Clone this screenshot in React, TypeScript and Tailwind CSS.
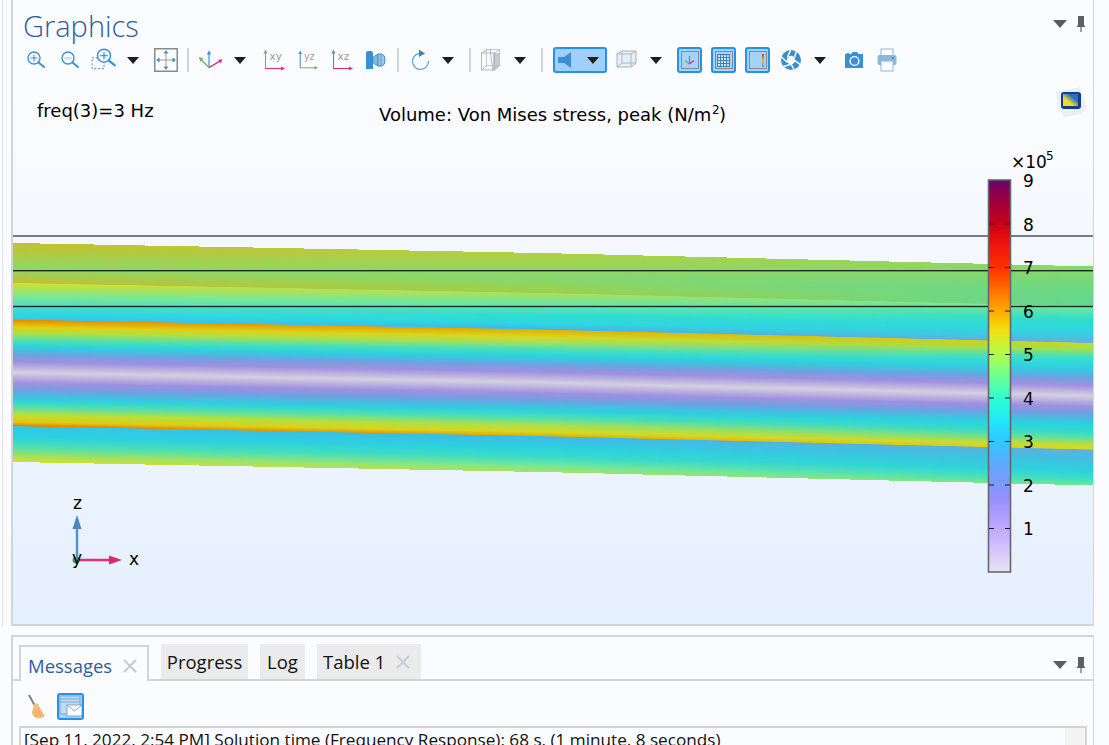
import React from 'react';

const BLUE = '#3b93d3';

// stress bands: local y at the left edge, then colour at left / middle / right of the plot
const bandStops: [number, string, string, string][] = [
  [243, '#c8c02c', '#b2d040', '#88d868'],
  [268, '#90d860', '#86d870', '#68d888'],
  [282.7, '#c0c038', '#a0d048', '#62d890'],
  [283.3, '#d0e030', '#a8e060', '#70e8a0'],
  [296, '#80e890', '#60e8b0', '#30dcc8'],
  [305, '#50e0c0', '#30dcd0', '#2cd8e0'],
  [313, '#2cd8e0', '#2cd8e0', '#40c8e0'],
  [319.2, '#38c8e8', '#40b8e8', '#60b0e0'],
  [319.9, '#e88c00', '#e0b000', '#d0d820'],
  [327, '#e0d010', '#d8d820', '#90e060'],
  [333, '#b0e040', '#a0e060', '#40e0c0'],
  [340, '#50e0b0', '#40e0c0', '#2cd8e0'],
  [347, '#2cd0e0', '#2cd0e0', '#38c8e0'],
  [355, '#70a0e0', '#70a0e0', '#70a0e0'],
  [362, '#a090e0', '#a090e0', '#a090e0'],
  [372.5, '#d4d0e0', '#d4d0e0', '#d4d0e0'],
  [383, '#a090e0', '#a090e0', '#a090e0'],
  [390, '#70a0e0', '#70a0e0', '#70a0e0'],
  [400, '#2cd0e0', '#2cd0e0', '#2cd0e0'],
  [408, '#60e0a0', '#50e0b0', '#30d8d0'],
  [415, '#c0e030', '#a8e050', '#60e0a0'],
  [422, '#e0c810', '#d8d820', '#c8dc30'],
  [425.8, '#e88000', '#e0b000', '#d8d820'],
  [426.5, '#30c8e8', '#40b8e8', '#60b0e0'],
  [437, '#2cd0e0', '#2cd0e0', '#40c0e0'],
  [447, '#50e0b0', '#38dcc8', '#2cd0e0'],
  [457, '#b0e050', '#80e890', '#40e0c0'],
  [462, '#d0e030', '#a8e060', '#70e890'],
];

const barStops: [number, string][] = [
  [180, '#6a0068'], [200, '#9c0040'], [224, '#c80018'], [240, '#e81010'], [267, '#ff3000'],
  [290, '#ff7000'], [313, '#ffb000'], [330, '#f0e010'], [355, '#b0ff50'], [375, '#70ff90'],
  [398, '#30ffd0'], [420, '#20e8f8'], [441, '#30c8ff'], [465, '#60a8ff'], [485, '#8098ff'],
  [500, '#9890ff'], [528, '#c0a8ff'], [572, '#e8e4f4'],
];

const mix = (a: string, b: string, t: number) => {
  const ch = (s: string, i: number) => parseInt(s.slice(1 + i * 2, 3 + i * 2), 16);
  const out = [0, 1, 2].map((i) => Math.round(ch(a, i) + (ch(b, i) - ch(a, i)) * t));
  return `rgb(${out.join(',')})`;
};

const BandColumns = () => {
  const cols = [];
  for (let x = 13; x < 1093; x += 3) {
    const off = x < 540 ? ((x - 13) / 527) * 10 : 10 + ((x - 540) / 553) * 13.5;
    cols.push({ x, off });
  }
  return (
    <>
      <defs>
        {cols.map(({ x, off }) => (
          <linearGradient key={x} id={`band${x}`} gradientUnits="userSpaceOnUse" x1="0" x2="0" y1={243 + off} y2={462 + off}>
            {bandStops.map(([y, l, c, r], i) => (
              <stop
                key={i}
                offset={(y - 243) / 219}
                stopColor={x < 540 ? mix(l, c, (x - 13) / 527) : mix(c, r, (x - 540) / 553)}
              />
            ))}
          </linearGradient>
        ))}
      </defs>
      {cols.map(({ x, off }) => (
        <rect key={x} x={x} y={243 + off} width={x + 3 >= 1093 ? 1093 - x : 3} height="219" fill={`url(#band${x})`} shapeRendering="crispEdges" />
      ))}
    </>
  );
};

const Plot = () => {
  const labels = [9, 8, 7, 6, 5, 4, 3, 2, 1];
  const font = { fontFamily: '"DejaVu Sans", sans-serif' };
  return (
    <svg className="block h-full w-full" viewBox="13 85 1080 539" style={font}>
      <defs>
        <linearGradient id="scale" gradientUnits="userSpaceOnUse" x1="0" x2="0" y1="180" y2="572">
          {barStops.map(([y, c]) => (
            <stop key={y} offset={(y - 180) / 392} stopColor={c} />
          ))}
        </linearGradient>
        <linearGradient id="logo" x1="0" y1="1" x2="1" y2="0">
          <stop offset="0.35" stopColor="#f2d92c" />
          <stop offset="0.7" stopColor="#2a6fc4" />
        </linearGradient>
      </defs>
      <BandColumns />
      <rect x="13" y="235" width="1080" height="2" fill="#7a7a82" />
      <rect x="13" y="270" width="1080" height="1.4" fill="#1f2a26" />
      <rect x="13" y="305.8" width="1080" height="1.4" fill="#1f2a26" />

      <text x="37" y="117" fontSize="18" fill="#000">freq(3)=3 Hz</text>
      <text x="379" y="121" fontSize="18" fill="#000">Volume: Von Mises stress, peak (N/m</text>
      <text x="712" y="114" fontSize="12" fill="#000">2</text>
      <text x="719" y="121" fontSize="18" fill="#000">)</text>

      {/* logo badge */}
      <path d="M1056 92 L1080 87 L1087 108 L1082 114 L1064 117 L1058 108 Z" fill="#eceef0" />
      <rect x="1061" y="92" width="20" height="17" rx="3" fill="#123f8c" />
      <rect x="1063" y="94" width="15" height="12" fill="url(#logo)" />

      {/* colour scale */}
      <rect x="988.5" y="180" width="22" height="392" fill="url(#scale)" />
      <rect x="988.5" y="180" width="22" height="392" fill="none" stroke="#66666e" strokeWidth="1.6" />
      {labels.map((n, i) => {
        const y = 180 + i * 43.5;
        return (
          <g key={n}>
            {i > 0 && <path d={`M989 ${y + 0.5} h5 M1005 ${y + 0.5} h5`} stroke="#1a1a1a" strokeWidth="1" />}
            <text x="1023" y={y + 7} fontSize="17" fill="#000">{n}</text>
          </g>
        );
      })}
      <text x="1011" y="168" fontSize="17" fill="#000">×10</text>
      <text x="1046" y="160" fontSize="12" fill="#000">5</text>

      {/* axis triad */}
      <circle cx="76" cy="560" r="3.5" fill="#4aa84a" />
      <path d="M77 560 V526" stroke="#5b92c8" strokeWidth="2.5" />
      <path d="M77 515 L81.5 529 H72.5 Z" fill="#4a86c2" />
      <path d="M77 560 H110" stroke="#e0306e" strokeWidth="2.4" />
      <path d="M122 560 L109 555.5 V564.5 Z" fill="#e0286a" />
      <text x="73" y="509" fontSize="17" fill="#000">z</text>
      <text x="72" y="564" fontSize="17" fill="#000">y</text>
      <text x="129" y="565" fontSize="17" fill="#000">x</text>
    </svg>
  );
};

const Caret = () => (
  <svg width="12" height="7" viewBox="0 0 12 7">
    <path d="M0 0 H12 L6 7 Z" fill="#1e1e1e" />
  </svg>
);

const Icon = ({ children, size = 24 }: { children: React.ReactNode; size?: number }) => (
  <svg width={size} height={size} viewBox="0 0 24 24" fill="none">
    {children}
  </svg>
);

const Lens = ({ cx = 10, cy = 10, mark = 'plus' }: { cx?: number; cy?: number; mark?: 'plus' | 'minus' }) => (
  <g stroke={BLUE} strokeLinecap="round">
    <circle cx={cx} cy={cy} r="6" strokeWidth="1.4" fill="#f4faff" />
    <path d={`M${cx + 4.5} ${cy + 4.5} L${cx + 10} ${cy + 9}`} strokeWidth="2" />
    <path d={mark === 'plus' ? `M${cx - 3} ${cy} h6 M${cx} ${cy - 3} v6` : `M${cx - 3} ${cy} h6`} strokeWidth="1.1" stroke={mark === 'plus' ? BLUE : '#9cc4e4'} />
  </g>
);

const ZoomBox = () => (
  <Icon size={26}>
    <rect x="1" y="10" width="11" height="10" stroke={BLUE} strokeDasharray="2 1.5" strokeWidth="0.9" />
    <Lens cx={12} cy={8} />
  </Icon>
);

const Extents = () => (
  <svg width="24" height="24" viewBox="0 0 24 24" fill="none">
    <rect x="0.75" y="0.75" width="22.5" height="22.5" stroke="#8a8a8a" strokeWidth="1.5" fill="#fbfcff" />
    <path d="M12 5 V19 M5 12 H19" stroke="#9a9a9a" strokeWidth="1" />
    <path d="M12 2 L14.5 5.5 H9.5 Z M12 22 L14.5 18.5 H9.5 Z M2 12 L5.5 9.5 V14.5 Z M22 12 L18.5 9.5 V14.5 Z" fill={BLUE} />
  </svg>
);

const Axes = () => (
  <Icon size={26}>
    <path d="M12 19 V6" stroke={BLUE} strokeWidth="1.1" />
    <path d="M12 3 L14 7 H10 Z" fill={BLUE} />
    <path d="M12 19 L4 11" stroke="#6cb85c" strokeWidth="1.3" />
    <path d="M2.5 9 L7 10.5 L4 13.5 Z" fill="#6cb85c" />
    <path d="M12 19 L22 13" stroke="#e0306e" strokeWidth="1.3" />
    <path d="M25 11.5 L20.5 11.5 L22.5 15 Z" fill="#e0306e" />
  </Icon>
);

const PlaneAxes = ({ label, up, right }: { label: string; up: string; right: string }) => (
  <svg width="24" height="24" viewBox="0 0 24 24" fill="none">
    <path d="M3.5 5 V20.5" stroke={up} strokeWidth="1.1" />
    <path d="M3.5 1.5 L5.5 5.5 H1.5 Z" fill={up} />
    <path d="M3 20.5 H20" stroke={right} strokeWidth="1.1" />
    <path d="M23 20.5 L19 18.5 V22.5 Z" fill={right} />
    <text x="7.5" y="12" fontSize="10.5" fill="#a0a0a0" fontFamily='"DejaVu Sans", sans-serif'>{label}</text>
  </svg>
);

const Scene = () => (
  <svg width="22" height="20" viewBox="0 0 22 20" fill="none">
    <path d="M1 3 Q1 1 3 1 H6 Q8 1 8 3 V19 H1 Z" fill="#3a90d4" />
    <path d="M8 7 L13 4 V16 L8 13 Z" fill="#8ab8dc" stroke="#3a90d4" strokeWidth="0.8" />
    <path d="M13 4 H17 Q20 5 20 10 Q20 15 17 16 H13 Z" fill="#a4c8e4" stroke="#3a90d4" strokeWidth="1" />
    <path d="M16 4.5 V15.5" stroke="#3a90d4" strokeWidth="0.8" />
  </svg>
);

const Rotate = () => (
  <Icon size={24}>
    <path d="M10 5.5 A8 8 0 1 0 19.5 13" stroke="#5aa6de" strokeWidth="1.3" />
    <path d="M10 1.5 L16 5.5 L10 9 Z" fill="#2f86c8" />
  </Icon>
);

const WireCube = () => (
  <svg width="22" height="24" viewBox="0 0 22 24" fill="none">
    <path d="M13 5 H20 V18 L14 22 H13 Z" fill="#cbcbcb" />
    <rect x="1.5" y="5" width="13" height="17" stroke="#a8a8a8" strokeWidth="0.8" />
    <rect x="6.5" y="1.5" width="13" height="16" stroke="#bdbdbd" strokeWidth="0.8" />
    <path d="M1.5 5 L6.5 1.5 M14.5 5 L19.5 1.5 M14.5 22 L19.5 17.5 M1.5 22 L6.5 17.5" stroke="#a8a8a8" strokeWidth="0.8" />
    <path d="M10 1 L13 23" stroke="#7cb8e4" strokeWidth="0.8" />
  </svg>
);

const BoxIcon = () => (
  <svg width="22" height="20" viewBox="0 0 22 20" fill="none">
    <path d="M1 4 L6 1 H20 V13 L15 17 H1 Z" fill="#e6eef6" stroke="#a6b2bc" strokeWidth="1" />
    <path d="M1 4 H15 V17 M15 4 L20 1 M6 1 V13 H20 M1 17 L6 13" stroke="#a6b2bc" strokeWidth="0.9" />
  </svg>
);

const Toggle = ({ children }: { children: React.ReactNode }) => (
  <div className="flex h-[26px] w-[25px] shrink-0 items-center justify-center rounded-[3px] border-2 border-[#2391ee] bg-[#a5d3fa]">
    <div className="flex h-[18px] w-[18px] items-center justify-center border-[1.5px] border-[#85888c]">{children}</div>
  </div>
);

const Aperture = () => (
  <svg width="22" height="22" viewBox="0 0 22 22" fill="none">
    <circle cx="11" cy="11" r="10" fill="#3a8fca" />
    <circle cx="11" cy="11" r="4.2" fill="#fbfcff" />
    <g stroke="#fbfcff" strokeWidth="1.5">
      <path d="M14.5 8.5 L17 0" />
      <path d="M15 11.7 L22 17" />
      <path d="M12 15 L3.5 17.5" />
      <path d="M7.5 13.5 L1 7.5" />
      <path d="M7.5 8 L11 0" />
      <path d="M11 15 L15 22" />
    </g>
  </svg>
);

const Camera = () => (
  <svg width="20" height="18" viewBox="0 0 20 18">
    <path d="M1 3 H3 V2 H5 V3 H7 L8.5 1 H13 L14.5 3 H19 V17 H1 Z" fill="#3a90d0" />
    <circle cx="10.5" cy="10" r="4.4" fill="#3a90d0" stroke="#fbfcff" strokeWidth="1.4" />
  </svg>
);

const Printer = () => (
  <svg width="20" height="24" viewBox="0 0 20 24" fill="none">
    <rect x="4" y="1" width="12" height="8" fill="#fbfcff" stroke="#8ab8dc" strokeWidth="1" />
    <rect x="0.5" y="7" width="19" height="10" rx="2" fill="#8fb8d8" />
    <circle cx="16" cy="10" r="1" fill="#3a80b8" />
    <rect x="4" y="13" width="12" height="10" fill="#fbfcff" stroke="#8ab8dc" strokeWidth="1" />
  </svg>
);

const Pin = () => (
  <svg width="10" height="16" viewBox="0 0 10 16">
    <path d="M2 0 H8 V9 L9.5 11 H5.6 V16 H4.4 V11 H0.5 L2 9 Z" fill="#5c6066" />
  </svg>
);

const PanelControls = () => (
  <div className="flex items-center gap-[9px]">
    <svg width="14" height="8" viewBox="0 0 14 8">
      <path d="M0 0 H14 L7 8 Z" fill="#5a5e64" />
    </svg>
    <Pin />
  </div>
);

const Sep = () => <div className="h-[24px] w-[2px] shrink-0 bg-[#d2d2d4]" />;

const Slot = ({ className, children }: { className: string; children?: React.ReactNode }) => (
  <div className={`flex h-[30px] shrink-0 items-center justify-center ${className}`}>{children}</div>
);

const Toolbar = () => (
  <div className="flex h-[30px] items-center pl-[6px]">
    <Slot className="w-[34px]"><Icon><Lens cx={10} cy={10} /></Icon></Slot>
    <Slot className="w-[34px]"><Icon><Lens cx={10} cy={10} mark="minus" /></Icon></Slot>
    <Slot className="w-[34px]"><ZoomBox /></Slot>
    <Slot className="w-[23px]"><Caret /></Slot>
    <Slot className="w-[43px]"><Extents /></Slot>
    <Sep />
    <Slot className="w-[40px]"><Axes /></Slot>
    <Slot className="w-[22px]"><Caret /></Slot>
    <Slot className="w-[46px]"><PlaneAxes label="xy" up="#6cb85c" right="#e0306e" /></Slot>
    <Slot className="w-[22px]"><PlaneAxes label="yz" up={BLUE} right="#6cb85c" /></Slot>
    <Slot className="w-[46px]"><PlaneAxes label="xz" up={BLUE} right="#e0306e" /></Slot>
    <Slot className="w-[22px]"><Scene /></Slot>
    <Slot className="w-[22px]"><Sep /></Slot>
    <Slot className="w-[24px]"><Rotate /></Slot>
    <Slot className="w-[30px]"><Caret /></Slot>
    <Slot className="w-[14px]"><Sep /></Slot>
    <Slot className="w-[28px]"><WireCube /></Slot>
    <Slot className="w-[30px]"><Caret /></Slot>
    <Slot className="w-[14px]"><Sep /></Slot>
    <div className="ml-[4px] flex h-[26px] w-[54px] shrink-0 items-center rounded-[3px] border-2 border-[#2391ee] bg-[#a0d0fa] pl-[2px]">
      <svg width="18" height="18" viewBox="0 0 18 18">
        <path d="M1 6 H7 L14 1 V17 L7 12 H1 Z" fill="#3a90d4" />
      </svg>
      <div className="ml-[12px]"><Caret /></div>
    </div>
    <Slot className="w-[40px]"><BoxIcon /></Slot>
    <Slot className="w-[18px]"><Caret /></Slot>
    <div className="ml-[12px] flex items-center gap-[9px]">
      <Toggle>
        <svg width="13" height="13" viewBox="0 0 13 13" fill="none">
          <path d="M6.5 10 V2" stroke={BLUE} strokeWidth="1.2" />
          <path d="M6.5 10 L2 6.5" stroke="#6cb85c" strokeWidth="1.2" />
          <path d="M6.5 10 L11 6.5" stroke="#e0306e" strokeWidth="1.2" />
        </svg>
      </Toggle>
      <Toggle>
        <div className="grid h-[13px] w-[13px] grid-cols-4 gap-px bg-[#3f7fb4] p-px">
          {Array.from({ length: 16 }).map((_, i) => (
            <div key={i} className="bg-[#cfe6fb]" />
          ))}
        </div>
      </Toggle>
      <Toggle>
        <div className="ml-auto mr-[2px] h-[13px] w-[2px] bg-linear-to-b from-[#e03020] via-[#f0b020] to-[#4a90d8]" />
      </Toggle>
    </div>
    <Slot className="w-[42px]"><Aperture /></Slot>
    <Slot className="w-[16px]"><Caret /></Slot>
    <Slot className="ml-[6px] w-[40px]"><Camera /></Slot>
    <Slot className="w-[26px]"><Printer /></Slot>
  </div>
);

const Cross = () => (
  <svg width="14" height="14" viewBox="0 0 14 14">
    <path d="M1 1 L13 13 M13 1 L1 13" stroke="#c6ccd4" strokeWidth="2" />
  </svg>
);

const Broom = () => (
  <svg width="20" height="26" viewBox="0 0 20 26" fill="none">
    <path d="M2 1 L8 12" stroke="#85807a" strokeWidth="2" />
    <path d="M7 10 L10 9 L18 22 Q14 25 9 24 Q5 22 5 18 Z" fill="#f5bd7c" />
    <path d="M8 15 L10 23 M11 14 L14 23" stroke="#e8a050" strokeWidth="0.8" />
  </svg>
);

const MailToggle = () => (
  <div className="flex h-[27px] w-[27px] items-center justify-center rounded-[3px] border-2 border-[#2391ee] bg-[#a5d3fa]">
    <svg width="23" height="23" viewBox="0 0 23 23" fill="none">
      <rect x="1" y="1" width="20" height="18" fill="#bcdcf8" stroke="#7fa8cc" strokeWidth="1" />
      <path d="M1 4 H21 M1 7 H21" stroke="#7fa8cc" strokeWidth="1" />
      <rect x="8" y="10" width="15" height="11" fill="#fbfcff" stroke="#7f96ac" strokeWidth="0.8" />
      <path d="M8 10 L15.5 16 L23 10" stroke="#7f96ac" strokeWidth="0.8" />
    </svg>
  </div>
);

const tabFont = "font-['Open_Sans',sans-serif] text-[18.5px]";

const App = () => {
  return (
    <div className="flex h-[745px] w-[1109px] flex-col overflow-hidden bg-[#fbfcff]">
      <div className="ml-[2px] flex h-[626px] w-[1092px]">
        <div className="w-[9px] shrink-0 border-l border-[#e2e2e4]" />
        <section className="flex w-[1083px] flex-col border-b-2 border-l-2 border-r border-[#d4d4d6]">
          <header className="h-[85px] shrink-0">
            <div className="flex h-[45px] items-center justify-between pr-[7px]">
              <h1 className="pl-[10px] pt-[6px] font-['Open_Sans',sans-serif] text-[29px] font-light text-[#2f5c9e]">Graphics</h1>
              <div className="pt-[2px]"><PanelControls /></div>
            </div>
            <Toolbar />
          </header>
          <div className="min-h-0 flex-1 bg-linear-to-b from-[#fbfcff] to-[#e5f0fe]">
            <Plot />
          </div>
        </section>
      </div>

      <section className="ml-[11px] mt-[9px] w-[1083px] flex-1 border-l-2 border-r border-t-2 border-[#d4d4d6]">
        <div className="flex h-[44px] items-end border-b-2 border-[#d4d4d6] pl-[6px] pr-[7px]">
          <div className={`-mb-[2px] flex h-[36px] w-[130px] items-center gap-[11px] border-2 border-b-0 border-[#d4d4d6] bg-[#fbfcff] pl-[7px] pt-[3px] ${tabFont} text-[#2f5c9e]`}>
            Messages
            <Cross />
          </div>
          <div className={`ml-[12px] flex h-[35px] w-[87px] items-center justify-center bg-[#ebebeb] ${tabFont} text-[#111]`}>Progress</div>
          <div className={`ml-[12px] flex h-[35px] w-[45px] items-center justify-center bg-[#ebebeb] ${tabFont} text-[#111]`}>Log</div>
          <div className={`ml-[12px] flex h-[35px] w-[104px] items-center gap-[11px] bg-[#ebebeb] pl-[6px] ${tabFont} text-[#111]`}>
            Table 1
            <Cross />
          </div>
          <div className="ml-auto pb-[6px]"><PanelControls /></div>
        </div>
        <div className="flex h-[45px] items-center gap-[10px] pl-[14px] pt-[6px]">
          <Broom />
          <MailToggle />
        </div>
        <div className="ml-[6px] mr-[6px] flex h-[30px] border-2 border-b-0 border-[#d4d4d6]">
          <p className="flex-1 whitespace-nowrap pl-[3px] font-['Open_Sans',sans-serif] text-[17.15px] leading-[24px] text-[#111]">
            [Sep 11, 2022, 2:54 PM] Solution time (Frequency Response): 68 s. (1 minute, 8 seconds)
          </p>
          <div className="w-[20px] bg-[#f4f4f4]" />
        </div>
      </section>
    </div>
  );
};

export default App;
